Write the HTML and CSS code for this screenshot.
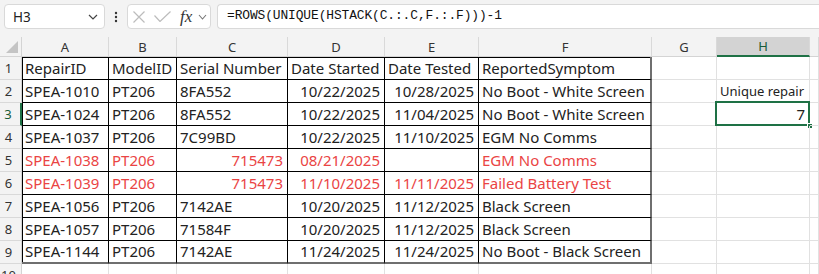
FILE: index.html
```html
<!DOCTYPE html>
<html lang="en">
<head>
    <meta charset="UTF-8">
    <title>Repairs - Excel</title>
    <link rel="stylesheet" href="styles.css">
</head>
<body>
    <div class="toolbar">
        <div class="namebox">
            <span>H3</span>
            <svg class="chev" width="10" height="6" viewBox="0 0 10 6"><path d="M1 1 L5 5 L9 1" fill="none" stroke="#444" stroke-width="1.2"/></svg>
        </div>
        <div class="dots">
            <svg width="4" height="12" viewBox="0 0 4 12"><circle cx="2" cy="2" r="1.2" fill="#333"/><circle cx="2" cy="6" r="1.2" fill="#333"/><circle cx="2" cy="10" r="1.2" fill="#333"/></svg>
        </div>
        <div class="fxbox">
            <svg width="12" height="12" viewBox="0 0 12 12"><path d="M0.5 0.5 L11.5 11.5 M11.5 0.5 L0.5 11.5" stroke="#bcbcbc" stroke-width="1.2"/></svg>
            <svg width="17" height="11" viewBox="0 0 17 11"><path d="M0.5 4.5 L6 10.5 L16.5 0.5" fill="none" stroke="#bcbcbc" stroke-width="1.2"/></svg>
            <span class="fx">fx</span>
            <svg class="chev" width="9" height="6" viewBox="0 0 9 6"><path d="M1 1 L4.5 5 L8 1" fill="none" stroke="#777" stroke-width="1.1"/></svg>
        </div>
        <div class="formula">=ROWS(UNIQUE(HSTACK(C.:.C,F.:.F)))-1</div>
    </div>

    <div class="sheet">
        <div class="hdr corner"><span class="tri"></span></div>
        <div class="hdr">A</div>
        <div class="hdr">B</div>
        <div class="hdr">C</div>
        <div class="hdr">D</div>
        <div class="hdr">E</div>
        <div class="hdr">F</div>
        <div class="hdr">G</div>
        <div class="hdr sel">H</div>
        <div class="hdr"></div>

        <!-- row 1 -->
        <div class="rn">1</div>
        <div class="c t tl top">RepairID</div>
        <div class="c t top">ModelID</div>
        <div class="c t top">Serial Number</div>
        <div class="c t top">Date Started</div>
        <div class="c t top">Date Tested</div>
        <div class="c t last top">ReportedSymptom</div>
        <div class="c"></div>
        <div class="c"></div>
        <div class="c"></div>

        <!-- row 2 -->
        <div class="rn">2</div>
        <div class="c t tl">SPEA-1010</div>
        <div class="c t">PT206</div>
        <div class="c t">8FA552</div>
        <div class="c t r">10/22/2025</div>
        <div class="c t r">10/28/2025</div>
        <div class="c t last">No Boot - White Screen</div>
        <div class="c"></div>
        <div class="c small">Unique repair</div>
        <div class="c"></div>

        <!-- row 3 -->
        <div class="rn cur">3</div>
        <div class="c t tl">SPEA-1024</div>
        <div class="c t">PT206</div>
        <div class="c t">8FA552</div>
        <div class="c t r">10/22/2025</div>
        <div class="c t r">11/04/2025</div>
        <div class="c t last">No Boot - White Screen</div>
        <div class="c"></div>
        <div class="c r active">7<span class="outline"></span><span class="handle"></span></div>
        <div class="c"></div>

        <!-- row 4 -->
        <div class="rn">4</div>
        <div class="c t tl">SPEA-1037</div>
        <div class="c t">PT206</div>
        <div class="c t">7C99BD</div>
        <div class="c t r">10/22/2025</div>
        <div class="c t r">11/10/2025</div>
        <div class="c t last">EGM No Comms</div>
        <div class="c"></div>
        <div class="c"></div>
        <div class="c"></div>

        <!-- row 5 -->
        <div class="rn">5</div>
        <div class="c t tl red">SPEA-1038</div>
        <div class="c t red">PT206</div>
        <div class="c t r red">715473</div>
        <div class="c t r red">08/21/2025</div>
        <div class="c t red"></div>
        <div class="c t last red">EGM No Comms</div>
        <div class="c"></div>
        <div class="c"></div>
        <div class="c"></div>

        <!-- row 6 -->
        <div class="rn">6</div>
        <div class="c t tl red">SPEA-1039</div>
        <div class="c t red">PT206</div>
        <div class="c t r red">715473</div>
        <div class="c t r red">11/10/2025</div>
        <div class="c t r red">11/11/2025</div>
        <div class="c t last red">Failed Battery Test</div>
        <div class="c"></div>
        <div class="c"></div>
        <div class="c"></div>

        <!-- row 7 -->
        <div class="rn">7</div>
        <div class="c t tl">SPEA-1056</div>
        <div class="c t">PT206</div>
        <div class="c t">7142AE</div>
        <div class="c t r">10/20/2025</div>
        <div class="c t r">11/12/2025</div>
        <div class="c t last">Black Screen</div>
        <div class="c"></div>
        <div class="c"></div>
        <div class="c"></div>

        <!-- row 8 -->
        <div class="rn">8</div>
        <div class="c t tl">SPEA-1057</div>
        <div class="c t">PT206</div>
        <div class="c t">71584F</div>
        <div class="c t r">10/20/2025</div>
        <div class="c t r">11/12/2025</div>
        <div class="c t last">Black Screen</div>
        <div class="c"></div>
        <div class="c"></div>
        <div class="c"></div>

        <!-- row 9 -->
        <div class="rn">9</div>
        <div class="c t tl bot">SPEA-1144</div>
        <div class="c t bot">PT206</div>
        <div class="c t bot">7142AE</div>
        <div class="c t r bot">11/24/2025</div>
        <div class="c t r bot">11/24/2025</div>
        <div class="c t last bot">No Boot - Black Screen</div>
        <div class="c"></div>
        <div class="c"></div>
        <div class="c"></div>

        <!-- row 10 -->
        <div class="rn">10</div>
        <div class="c"></div>
        <div class="c"></div>
        <div class="c"></div>
        <div class="c"></div>
        <div class="c"></div>
        <div class="c"></div>
        <div class="c"></div>
        <div class="c"></div>
        <div class="c"></div>
    </div>
</body>
</html>
```

FILE: styles.css
```css
* {
    box-sizing: border-box;
}

body {
    margin: 0;
    background: #ffffff;
    font-family: 'Noto Sans', 'Open Sans', sans-serif;
    color: #222;
    overflow: hidden;
}

/* formula bar */
.toolbar {
    display: flex;
    align-items: center;
    height: 37px;
    padding: 4px 0 8px 4px;
    background: #f3f3f3;
}

.namebox {
    display: flex;
    align-items: center;
    justify-content: space-between;
    width: 101px;
    height: 25px;
    padding: 0 6px 0 8px;
    background: #fff;
    border: 1px solid #d9d9d9;
    border-radius: 4px;
    font-size: 13.5px;
    color: #222;
}

.dots {
    display: flex;
    justify-content: center;
    width: 22px;
}

.fxbox {
    display: flex;
    align-items: center;
    gap: 9px;
    width: 84px;
    height: 25px;
    padding: 0 0 0 5px;
    background: #fff;
    border: 1px solid #d9d9d9;
    border-radius: 4px;
}

.fx {
    font-family: 'Liberation Serif', 'DejaVu Serif', serif;
    font-style: italic;
    font-size: 17px;
    color: #333;
    margin-right: -3px;
}

.formula {
    flex: 1;
    height: 25px;
    margin-left: 6px;
    padding: 3px 0 0 9px;
    background: #fff;
    border: 1px solid #d9d9d9;
    border-right: none;
    border-radius: 4px 0 0 4px;
    font-family: 'Liberation Mono', 'DejaVu Sans Mono', monospace;
    font-size: 12.9px;
    letter-spacing: -0.1px;
    color: #111;
}

/* grid */
.sheet {
    display: grid;
    grid-template-columns: 22px 87px 68px 111px 97px 94px 173px 65px 93px 1fr;
    grid-template-rows: 20px repeat(10, 23px);
    font-size: 15px;
}

.hdr {
    display: flex;
    align-items: center;
    justify-content: center;
    background: #f3f3f3;
    border-right: 1px solid #d9d9d9;
    border-bottom: 1px solid #d4d4d4;
    font-size: 13px;
    color: #333;
}

.hdr.corner {
    position: relative;
    border-right-color: #d4d4d4;
}

.tri {
    position: absolute;
    right: 3px;
    bottom: 3px;
    width: 0;
    height: 0;
    border-left: 12px solid transparent;
    border-bottom: 12px solid #c4c4c4;
}

.hdr.sel {
    background: #d3d3d3;
    border-bottom: 2px solid #1e7145;
    color: #185c37;
}

.rn {
    display: flex;
    align-items: flex-end;
    justify-content: center;
    padding: 0 4px 2px 0;
    background: #f3f3f3;
    border-right: 1px solid #d4d4d4;
    border-bottom: 1px solid #d9d9d9;
    font-size: 13px;
    color: #333;
}

.rn.cur {
    border-right: 2px solid #1e7145;
    color: #185c37;
}

.c {
    position: relative;
    display: flex;
    align-items: flex-end;
    padding: 0 3px 1px 3px;
    border-right: 1px solid #e1e1e1;
    border-bottom: 1px solid #e1e1e1;
    white-space: nowrap;
}

.c.t {
    border-right-color: #000;
    border-bottom-color: #000;
}

.c.tl {
    box-shadow: inset 1px 0 0 #000;
    padding-left: 3px;
}

.c.top {
    box-shadow: inset 0 1px 0 #000;
}

.c.tl.top {
    box-shadow: inset 1px 1px 0 #000;
}

.c.last {
    border-right: 2px solid #6f6f6f;
}

.c.bot {
    border-bottom: 2px solid #6f6f6f;
}

.c.r {
    justify-content: flex-end;
    padding-right: 4px;
}

.red {
    color: #ea4444;
}

.small {
    font-size: 13px;
    padding-left: 3px;
    padding-bottom: 2px;
}

.active {
    overflow: visible;
}

.outline {
    position: absolute;
    top: -2px;
    left: -2px;
    right: -1px;
    bottom: -1px;
    border: 2px solid #1e7145;
}

.handle {
    position: absolute;
    right: -4px;
    bottom: -4px;
    width: 6px;
    height: 6px;
    background: #1e7145;
    border: 1px solid #fff;
}
```
